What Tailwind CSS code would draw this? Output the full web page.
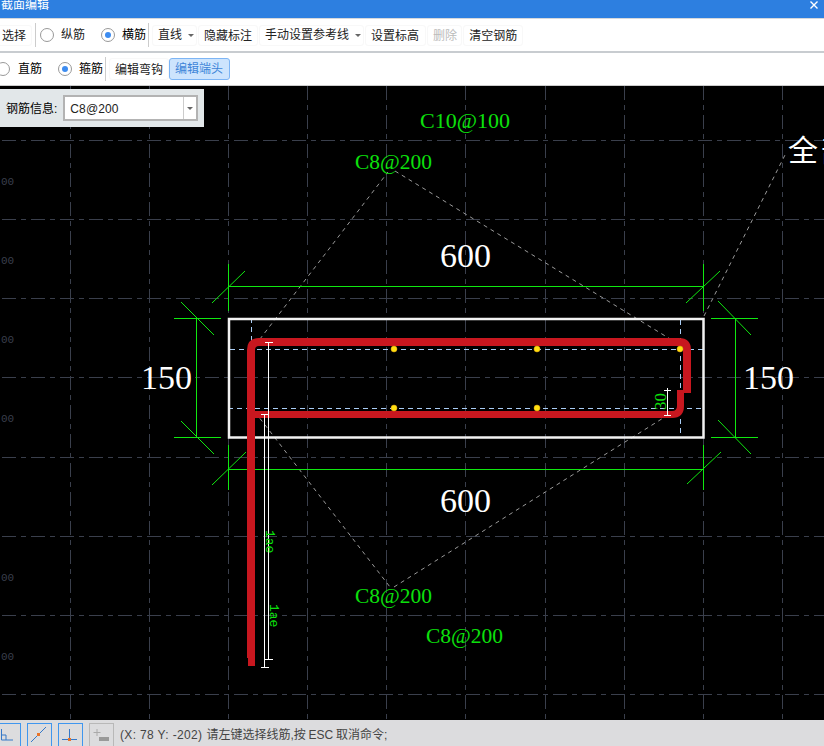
<!DOCTYPE html>
<html lang="en">
<head>
    <meta charset="UTF-8">
    <title>截面编辑</title>
    <script src="https://cdn.jsdelivr.net/npm/@tailwindcss/browser@4"></script>
</head>
<body class="w-[824px] h-[746px] overflow-hidden bg-white font-['Liberation_Sans','Noto_Sans_CJK_SC',sans-serif] text-[12px] text-[#222]">
    <div class="flex flex-col h-[746px] relative">
        <!-- title bar -->
        <div class="h-[18px] bg-[#2d7fe0] text-white text-[12px] flex items-start justify-between overflow-hidden">
            <span class="ml-[1px] -mt-[3px] leading-[16px]">截面编辑</span>
            <svg class="w-[8px] h-[8px] mr-[6px] mt-[1px]" viewBox="0 0 8 8"><path d="M0.500 0.500l7 7M7.500 0.500l-7 7" stroke="#fff" stroke-width="1.400"/></svg>
        </div>
        <!-- first toolbar -->
        <div class="h-[35px] border-t border-t-[#d5d8dc] border-b-2 border-b-[#c8ccd0] flex items-center">
            <span class="-ml-[4px] h-[21px] leading-[21px] px-[5px] border border-[#f8f8f8] rounded-[3px]">选择</span>
            <div class="w-px h-[24px] bg-[#ccc] ml-[3px] mr-[4px]"></div>
            <span class="w-[14px] h-[14px] rounded-full border border-[#999]"></span>
            <span class="ml-[7px]">纵筋</span>
            <span class="w-[14px] h-[14px] rounded-full border border-[#999] ml-[16px] flex items-center justify-center"><span class="w-[6px] h-[6px] rounded-full bg-[#3d8cf0]"></span></span>
            <span class="ml-[7px] text-black">横筋</span>
            <div class="w-px h-[24px] bg-[#ccc] ml-[2px] mr-[3px]"></div>
            <div class="flex items-center gap-[1px]">
                <span class="h-[21px] pl-[5px] pr-[1px] border border-[#f8f8f8] rounded-[3px] flex items-center">直线<span class="ml-[6px] mr-[1px] w-0 h-0 border-x-[3px] border-x-transparent border-t-[3px] border-t-[#666]"></span></span>
                <span class="h-[21px] leading-[21px] px-[5px] border border-[#f8f8f8] rounded-[3px]">隐藏标注</span>
                <span class="h-[21px] pl-[5px] pr-[1px] border border-[#f8f8f8] rounded-[3px] flex items-center">手动设置参考线<span class="ml-[6px] mr-[1px] w-0 h-0 border-x-[3px] border-x-transparent border-t-[3px] border-t-[#666]"></span></span>
                <span class="h-[21px] leading-[21px] pl-[5px] pr-[6px] border border-[#f8f8f8] rounded-[3px]">设置标高</span>
                <span class="h-[21px] leading-[21px] pl-[5px] pr-[4px] border border-[#f8f8f8] rounded-[3px] text-[#bbb]">删除</span>
                <span class="h-[21px] leading-[21px] px-[5px] border border-[#f8f8f8] rounded-[3px]">清空钢筋</span>
            </div>
        </div>
        <!-- second toolbar -->
        <div class="h-[33px] border-b border-b-[#ccc] flex items-center">
            <span class="w-[14px] h-[14px] rounded-full border border-[#999] -ml-[4px]"></span>
            <span class="ml-[8px] text-black">直筋</span>
            <span class="w-[14px] h-[14px] rounded-full border border-[#999] ml-[16px] flex items-center justify-center"><span class="w-[6px] h-[6px] rounded-full bg-[#3d8cf0]"></span></span>
            <span class="ml-[7px] text-black">箍筋</span>
            <div class="w-px h-[24px] bg-[#ccc] ml-[2px] mr-[3px]"></div>
            <span class="h-[22px] leading-[22px] px-[5px] border border-[#f8f8f8] rounded-[3px]">编辑弯钩</span>
            <span class="pl-[5px] pr-[6px] h-[22px] leading-[21px] rounded-[3px] bg-[#cde4fd] border border-[#7db5f5] text-[#3d84d8]">编辑端头</span>
        </div>
        <!-- canvas -->
        <div class="relative h-[634px] bg-black overflow-hidden">
            <svg class="absolute inset-0" width="824" height="634" viewBox="0 86 824 634" font-family="'Liberation Serif','Noto Sans CJK SC',serif">
                <!-- grid -->
                <g stroke="#3a3f4c" stroke-width="1" stroke-dasharray="14 5 5 5" fill="none">
                    <path d="M2 140.500H824M2 219.500H824M2 298.500H824M2 377.500H824M2 457.500H824M2 536.500H824M2 615.500H824M2 694.500H824"/>
                    <path d="M70.500 86V720M149.500 86V720M228.500 86V720M307.500 86V720M386.500 86V720M465.500 86V720M545.500 86V720M624.500 86V720M703.500 86V720M782.500 86V720"/>
                </g>
                <g fill="#3a3f4c" font-family="'Liberation Mono',monospace" font-size="11">
                    <text x="1" y="185">00</text>
                    <text x="1" y="264">00</text>
                    <text x="1" y="343">00</text>
                    <text x="1" y="422">00</text>
                    <text x="1" y="581">00</text>
                    <text x="1" y="660">00</text>
                </g>
                <!-- leader lines -->
                <g stroke="#9a9a9a" stroke-width="1" stroke-dasharray="4 4" fill="none">
                    <path d="M250 352L388 172M395 171L680 345M255 412L390 587M394 587L668 415M704 316L786 153"/>
                </g>
                <!-- guide lines -->
                <g stroke="#a9cdf5" stroke-width="1" stroke-dasharray="5 4" fill="none">
                    <path d="M230 349.500H704M228 408.500H704M251.500 318V350M680.500 320V436"/>
                </g>
                <!-- dimensions -->
                <g stroke="#10e810" stroke-width="1" fill="none">
                    <path d="M228.500 264V311M703.500 264V311M228 286.500H704M212 303L245 271M686 303L720 271"/>
                    <path d="M228.500 445V490M703.500 445V490M228 469.500H704M212 485L246 452M687 484L721 452"/>
                    <path d="M174 318.500H221M174 437.500H221M196.500 318V438M181 302L214 335M181 421L214 454"/>
                    <path d="M711 318.500H758M711 437.500H758M735.500 318V438M718 301L751 335M718 420L751 454"/>
                </g>
                <!-- section outline -->
                <rect x="229" y="319" width="474.500" height="118.500" fill="none" stroke="#f2f2f2" stroke-width="2.500"/>
                <!-- rebar -->
                <path d="M251 658V350Q251 342 259 342H679Q687 342 687 350V393" fill="none" stroke="#c8171f" stroke-width="8"/>
                <path d="M251.500 656V666" fill="none" stroke="#c8171f" stroke-width="7"/>
                <path d="M255 414.500H672Q680.500 414.500 680.500 406V390" fill="none" stroke="#c8171f" stroke-width="7"/>
                <!-- anchor lines -->
                <path d="M268.500 342V660M264.500 414V668" stroke="#fff" stroke-width="1" fill="none"/>
                <path d="M265 342.500H273M261 414.500H268M265 659.500H273M261 667.500H269M664 390.500H671M664 415.500H671M667.500 388V416" stroke="#fff" stroke-width="1" fill="none"/>
                <!-- snap points -->
                <g fill="#ffe010" stroke="#e0a010" stroke-width="0.500">
                    <circle cx="394" cy="349" r="3"/>
                    <circle cx="537" cy="349" r="3"/>
                    <circle cx="680" cy="349" r="3"/>
                    <circle cx="394" cy="408" r="3"/>
                    <circle cx="537" cy="408" r="3"/>
                </g>
                <!-- labels -->
                <g fill="#0ce00c" font-size="22">
                    <text x="420" y="128" textLength="90" lengthAdjust="spacingAndGlyphs">C10@100</text>
                    <text x="355" y="169" textLength="77" lengthAdjust="spacingAndGlyphs">C8@200</text>
                    <text x="355" y="603" textLength="77" lengthAdjust="spacingAndGlyphs">C8@200</text>
                    <text x="426" y="643" textLength="77" lengthAdjust="spacingAndGlyphs">C8@200</text>
                    <text transform="translate(666 410) rotate(-90)" font-size="17">30</text>
                    <text transform="translate(266 530) rotate(90)" font-family="'Liberation Mono',monospace" font-size="13">1ae</text>
                    <text transform="translate(270 604) rotate(90)" font-family="'Liberation Mono',monospace" font-size="13">1ae</text>
                </g>
                <g fill="#fff" font-size="34">
                    <text x="440" y="267">600</text>
                    <text x="440" y="512">600</text>
                    <text x="141" y="389">150</text>
                    <text x="743" y="389">150</text>
                    <text x="788" y="161" font-size="30" letter-spacing="3">全部</text>
                </g>
            </svg>
            <!-- rebar info panel -->
            <div class="absolute left-0 top-[3px] w-[204px] h-[38px] bg-[#e2e7e9] flex items-center pl-[6px]">
                <span class="text-black pt-[1px]">钢筋信息:</span>
                <div class="ml-[6px] w-[135px] h-[26px] border-2 border-[#b3b3b3] bg-white flex items-center">
                    <span class="flex-1 pl-[5px] text-[12px] pt-[1px] tracking-[0.1px]">C8@200</span>
                    <span class="w-[13px] h-full border-l border-l-[#ccc] flex items-center justify-center"><span class="w-0 h-0 border-x-[3px] border-x-transparent border-t-[3px] border-t-[#666]"></span></span>
                </div>
            </div>
        </div>
        <!-- status bar -->
        <div class="h-[26px] bg-[#dcdcde] flex items-start gap-[6px] pt-[3px] overflow-hidden">
            <div class="-ml-[10px] w-[31px] h-[26px] shrink-0 border border-[#3f96ee]">
                <svg width="29" height="24" viewBox="0 0 29 24" fill="none"><path d="M10.500 5V16H22M10.500 11H15V16" stroke="#3578c8"/></svg>
            </div>
            <div class="w-[25px] h-[26px] shrink-0 border border-[#3f96ee]">
                <svg width="23" height="24" viewBox="0 0 23 24" fill="none"><path d="M3 18L18 3" stroke="#3578c8"/><rect x="9" y="9" width="3" height="3" fill="#e8742a"/></svg>
            </div>
            <div class="w-[25px] h-[26px] shrink-0 border border-[#3f96ee]">
                <svg width="23" height="24" viewBox="0 0 23 24" fill="none"><path d="M3 15.500H18M10.500 5V15" stroke="#3578c8"/><rect x="9" y="14" width="3" height="3" fill="#e8742a"/></svg>
            </div>
            <div class="w-[25px] h-[26px] shrink-0 border border-[#b8b8b8]">
                <svg width="23" height="24" viewBox="0 0 23 24" fill="none"><path d="M3.500 8.500H10.500M7 5V12" stroke="#aaa"/><rect x="9" y="13" width="10" height="4" fill="#999"/></svg>
            </div>
            <span class="text-[#444] leading-[24px] whitespace-nowrap"><span class="tracking-[0.35px]">(X: 78 Y: -202)</span><span class="ml-[4px] [word-spacing:-0.5px]">请左键选择线筋,按 ESC 取消命令;</span></span>
        </div>
    </div>
</body>
</html>
